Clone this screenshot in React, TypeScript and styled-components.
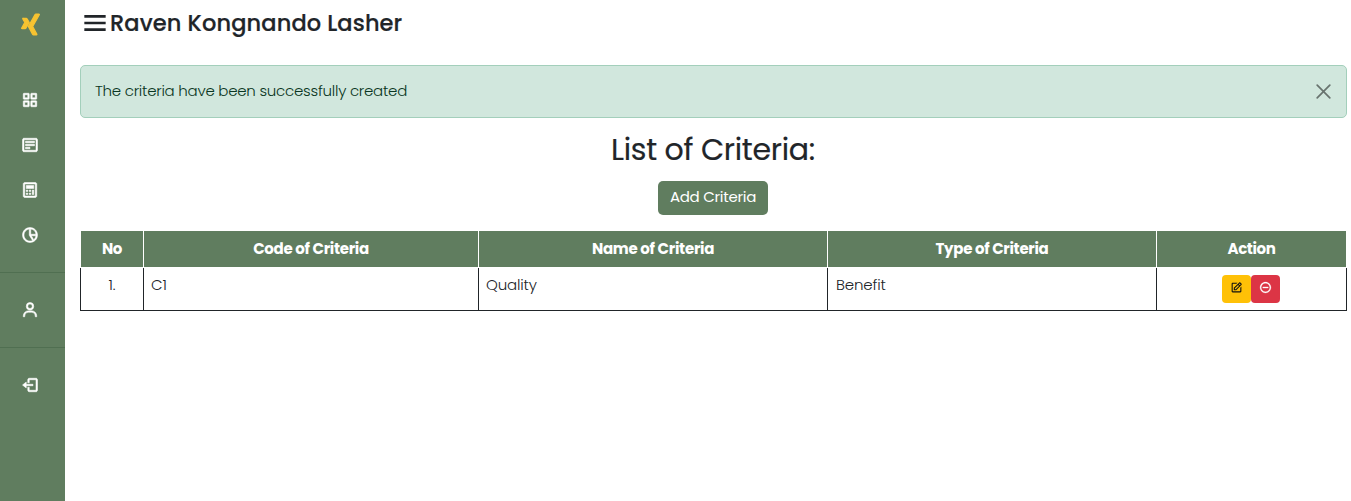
import React from "react";
import styled, { createGlobalStyle } from "styled-components";
import {
  BiCalculator, BiDetail, BiEdit, BiGridAlt, BiLogOut, BiMenu,
  BiMinusCircle, BiPieChartAlt2, BiUser, BiLogoXing,
} from "react-icons/bi";

const GlobalStyle = createGlobalStyle`
  *, *::before, *::after { box-sizing: border-box; }
  body {
    margin: 0;
    background: #fff;
    color: #212529;
    font-family: Poppins, Inter, "Liberation Sans", sans-serif;
    font-size: 15px;
    font-weight: 300;
    line-height: 22.5px;
  }
`;

const Page = styled.div`
  display: flex;
  min-height: 501px;
  height: 100vh;
  overflow: hidden;
`;

const Sidebar = styled.aside`
  width: 65px;
  flex: none;
  background: #607d5f;
  color: #fff;
`;

const Brand = styled.div`
  height: 77px;
  padding: 12px 0 0 17.5px;
  color: #f7c331;
  svg { display: block; stroke-width: 1.2px; }
`;

const NavItem = styled.a`
  display: flex;
  align-items: center;
  height: 45px;
  padding: 1px 0 0 21px;
  svg { stroke-width: 0.7px; }
`;

const NavGroup = styled.div<{ $last?: boolean }>`
  padding-bottom: 15px;
  margin-bottom: 14px;
  border-bottom: ${(p) => (p.$last ? "0" : "1px solid #506f51")};
`;

const Main = styled.main`
  flex: 1;
  min-width: 0;
  padding: 0 4px 0 15px;
`;

const Header = styled.header`
  display: flex;
  align-items: center;
  height: 65px;
  padding: 0 0 19px;
  svg { flex: none; margin: 0 -1px; }
`;

const Fitted = styled.span<{ $spacing: number }>`
  letter-spacing: ${(p) => p.$spacing}px;
  white-space: nowrap;
`;

const UserName = styled.div`
  font-size: 22.5px;
  line-height: 30px;
  font-weight: 500;
  -webkit-text-stroke: 0.2px;
`;

const Alert = styled.div`
  display: flex;
  align-items: center;
  justify-content: space-between;
  height: 53px;
  padding: 0 15px 1px 14px;
  border: 1px solid #a3cfbb;
  border-radius: 5px;
  background: #d1e7dd;
  color: #0a3622;
`;

const CloseButton = styled.button`
  display: block;
  width: 15px;
  height: 15px;
  margin-top: 1px;
  padding: 0;
  border: 0;
  background: none;
  color: #68736e;
  svg { display: block; }
`;

const Title = styled.h2`
  margin: 14px 0 13px;
  padding-right: 1px;
  font-size: 30px;
  line-height: 36px;
  font-weight: 400;
  text-align: center;
  -webkit-text-stroke: 0.2px;
`;

const AddButton = styled.button`
  display: block;
  width: 110px;
  height: 34px;
  margin: 0 auto 15px 578px;
  padding: 0 0 1px;
  border: 0;
  border-radius: 5px;
  background: #607d5f;
  color: #fff;
  font: inherit;
  font-weight: 400;
`;

const Table = styled.table`
  width: 1267px;
  table-layout: fixed;
  border-collapse: collapse;
`;

const HeadCell = styled.th`
  height: 37px;
  padding: 0;
  border: 1px solid #fff;
  background: #607d5f;
  color: #fff;
  font-weight: 700;
`;

const Cell = styled.td<{ $center?: boolean }>`
  height: 43px;
  padding: 6px 7px 7px;
  border: 1px solid #212529;
  border-top-color: #fff;
  vertical-align: top;
  text-align: ${(p) => (p.$center ? "center" : "left")};
`;

const TypeCell = styled(Cell)`
  padding-left: 8px;
`;

const Actions = styled.div`
  display: flex;
  justify-content: center;
  padding: 1px 2px 0 0;
`;

const ActionButton = styled.button<{ $tone: "edit" | "remove" }>`
  display: flex;
  justify-content: center;
  width: 29px;
  height: 28px;
  padding: 6px 0 0 1px;
  border: 0;
  border-radius: 4px;
  background: ${(p) => (p.$tone === "edit" ? "#ffc107" : "#dc3545")};
  color: ${(p) => (p.$tone === "edit" ? "#111" : "#fff")};
  svg { stroke-width: ${(p) => (p.$tone === "edit" ? "0" : "0.5px")}; }
`;

const columns = [
  { label: "No", width: 63, spacing: -0.4 },
  { label: "Code of Criteria", width: 335, spacing: -0.3 },
  { label: "Name of Criteria", width: 349, spacing: -0.27 },
  { label: "Type of Criteria", width: 329, spacing: -0.3 },
  { label: "Action", width: 190, spacing: -0.4 },
];

export default function App() {
  return (
    <>
      <GlobalStyle />
      <Page>
        <Sidebar>
          <Brand><BiLogoXing size={25} /></Brand>
          <NavGroup>
            <NavItem><BiGridAlt size={18} /></NavItem>
            <NavItem><BiDetail size={18} /></NavItem>
            <NavItem><BiCalculator size={18} /></NavItem>
            <NavItem><BiPieChartAlt2 size={18} /></NavItem>
          </NavGroup>
          <NavGroup><NavItem><BiUser size={18} /></NavItem></NavGroup>
          <NavGroup $last><NavItem><BiLogOut size={18} /></NavItem></NavGroup>
        </Sidebar>
        <Main>
          <Header>
            <BiMenu size={32} />
            <UserName><Fitted $spacing={0.13}>Raven Kongnando Lasher</Fitted></UserName>
          </Header>
          <Alert role="alert">
            <Fitted $spacing={-0.25}>The criteria have been successfully created</Fitted>
            <CloseButton aria-label="Close">
              <svg width="15" height="15" viewBox="0 0 15 15" fill="none" stroke="currentColor" strokeWidth="1.7" strokeLinecap="round">
                <path d="M1.2 1.2l12.6 12.6M13.8 1.2L1.2 13.8" />
              </svg>
            </CloseButton>
          </Alert>
          <Title><Fitted $spacing={-0.27}>List of Criteria:</Fitted></Title>
          <AddButton><Fitted $spacing={-0.27}>Add Criteria</Fitted></AddButton>
          <Table>
            <colgroup>
              {columns.map((c) => <col key={c.label} width={c.width} />)}
            </colgroup>
            <thead>
              <tr>
                {columns.map((c) => (
                  <HeadCell key={c.label}><Fitted $spacing={c.spacing}>{c.label}</Fitted></HeadCell>
                ))}
              </tr>
            </thead>
            <tbody>
              <tr>
                <Cell $center>1.</Cell>
                <Cell>C1</Cell>
                <Cell><Fitted $spacing={-0.15}>Quality</Fitted></Cell>
                <TypeCell><Fitted $spacing={-0.15}>Benefit</Fitted></TypeCell>
                <Cell>
                  <Actions>
                    <ActionButton $tone="edit" aria-label="Edit"><BiEdit size={13} /></ActionButton>
                    <ActionButton $tone="remove" aria-label="Remove"><BiMinusCircle size={13} /></ActionButton>
                  </Actions>
                </Cell>
              </tr>
            </tbody>
          </Table>
        </Main>
      </Page>
    </>
  );
}
